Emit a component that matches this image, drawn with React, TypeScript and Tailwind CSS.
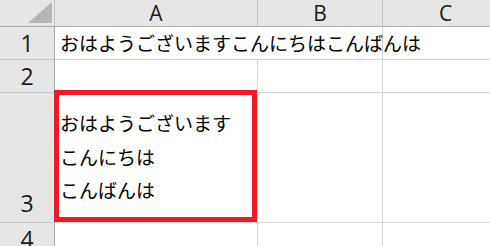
import React from "react";

const cjk = { fontFamily: '"Noto Sans CJK JP", "Noto Sans", sans-serif' };
const hdr = { fontFamily: '"Open Sans", "Liberation Sans", sans-serif' };

function ColHead({ label, w, last }: { label: string; w: string; last?: boolean }) {
  return (
    <div
      className={`${w} shrink-0 h-full flex items-center justify-center bg-[#e6e6e6] border-b border-b-[#ababab] ${last ? "" : "border-r border-r-[#c6c6c6]"} text-[21px] leading-none text-[#1a1a1a]`}
      style={hdr}
    >
      <span className="pt-[1px]">{label}</span>
    </div>
  );
}

function RowHead({ n, h, bottom }: { n: string; h: string; bottom?: boolean }) {
  return (
    <div
      className={`w-[55px] shrink-0 ${h} flex ${bottom ? "items-end" : "items-center"} justify-center bg-[#e6e6e6] border-r border-r-[#ababab] border-b border-b-[#c6c6c6] text-[23px] leading-none text-[#1a1a1a]`}
      style={hdr}
    >
      <span className={bottom ? "pb-[7px]" : "pt-[1px]"}>{n}</span>
    </div>
  );
}

function Cell({ w, children, extra }: { w: string; children?: React.ReactNode; extra?: string }) {
  return (
    <div className={`${w} shrink-0 h-full border-r border-b border-[#d4d4d4] bg-white ${extra ?? ""}`}>
      {children}
    </div>
  );
}

export default function App() {
  return (
    <div className="w-[490px] h-[246px] overflow-hidden bg-white flex flex-col">
      {/* column headers */}
      <div className="h-[27px] flex shrink-0">
        <div className="w-[55px] shrink-0 h-full bg-[#e6e6e6] border-r border-r-[#c6c6c6] border-b border-b-[#ababab] relative">
          <svg className="absolute left-0 top-0" width="54" height="26" viewBox="0 0 54 26">
            <polygon points="28,23 52,2 52,23" fill="#b6b6b6" />
          </svg>
        </div>
        <ColHead label="A" w="w-[203px]" />
        <ColHead label="B" w="w-[125px]" />
        <ColHead label="C" w="w-[125px]" last />
      </div>

      {/* row 1 */}
      <div className="h-[33px] flex shrink-0">
        <RowHead n="1" h="h-full" />
        <div className="w-[203px] shrink-0 h-full border-b border-[#d4d4d4] bg-white relative">
          <span
            className="absolute left-[5px] top-[1px] whitespace-nowrap text-[19px] leading-[30px] text-black"
            style={cjk}
          >
            おはようございますこんにちはこんばんは
          </span>
        </div>
        <Cell w="w-[125px]" />
        <Cell w="w-[125px]" />
      </div>

      {/* row 2 */}
      <div className="h-[33px] flex shrink-0">
        <RowHead n="2" h="h-full" />
        <Cell w="w-[203px]" />
        <Cell w="w-[125px]" />
        <Cell w="w-[125px]" />
      </div>

      {/* row 3 */}
      <div className="h-[130px] flex shrink-0">
        <RowHead n="3" h="h-full" bottom />
        <Cell w="w-[203px]" extra="relative">
          <div
            className="pl-[5px] pt-[13px] text-[19px] leading-[33.5px] text-black flex flex-col"
            style={cjk}
          >
            <span>おはようございます</span>
            <span>こんにちは</span>
            <span>こんばんは</span>
          </div>
          <div className="absolute left-[-1px] top-[-3px] right-0 bottom-0 border-[5px] border-[#ed1c24]" />
        </Cell>
        <Cell w="w-[125px]" />
        <Cell w="w-[125px]" />
      </div>

      {/* row 4 */}
      <div className="flex-1 flex">
        <RowHead n="4" h="h-[33px]" />
        <Cell w="w-[203px]" />
        <Cell w="w-[125px]" />
        <Cell w="w-[125px]" />
      </div>
    </div>
  );
}
